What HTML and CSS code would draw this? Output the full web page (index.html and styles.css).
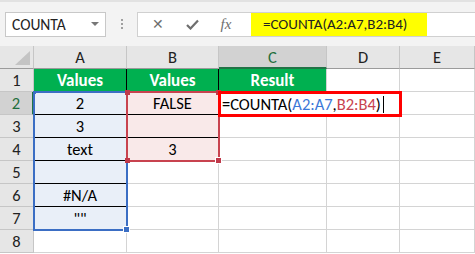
FILE: index.html
```html
<!DOCTYPE html>
<html>
<head>
<meta charset="utf-8">
<link rel="stylesheet" href="styles.css">
</head>
<body>
<div class="toolbar">
  <div class="namebox"><span>COUNTA</span><span class="caret"></span></div>
  <div class="dots"><i></i><i></i><i></i></div>
  <div class="fbar">
    <span class="ico x">✕</span>
    <span class="ico ok"><svg width="13" height="11" viewBox="0 0 13 11"><path d="M1 6 L4.5 9.5 L12 1.5" fill="none" stroke="#6e6e6e" stroke-width="2.2"/></svg></span>
    <span class="ico fx">fx</span>
    <span class="formula">=COUNTA(A2:A7,B2:B4)</span>
  </div>
</div>
<div class="wrap">
<div class="sheet">
  <div class="corner"><span class="tri"></span></div>
  <div class="ch">A</div><div class="ch">B</div><div class="ch sel">C</div><div class="ch">D</div><div class="ch">E</div>

  <div class="rh">1</div><div class="c green bk">Values</div><div class="c green bk">Values</div><div class="c green">Result</div><div class="c"></div><div class="c"></div>
  <div class="rh sel">2</div><div class="c blue">2</div><div class="c pink">FALSE</div><div class="c"></div><div class="c"></div><div class="c"></div>
  <div class="rh">3</div><div class="c blue">3</div><div class="c pink"></div><div class="c"></div><div class="c"></div><div class="c"></div>
  <div class="rh">4</div><div class="c blue">text</div><div class="c pink">3</div><div class="c"></div><div class="c"></div><div class="c"></div>
  <div class="rh">5</div><div class="c blue"></div><div class="c"></div><div class="c"></div><div class="c"></div><div class="c"></div>
  <div class="rh">6</div><div class="c blue">#N/A</div><div class="c"></div><div class="c"></div><div class="c"></div><div class="c"></div>
  <div class="rh">7</div><div class="c blue last">""</div><div class="c"></div><div class="c"></div><div class="c"></div><div class="c"></div>
  <div class="rh">8</div><div class="c"></div><div class="c"></div><div class="c"></div><div class="c"></div><div class="c"></div>
</div>
<div class="overlay">
  <div class="range-a"><span class="h tl"></span><span class="h br"></span></div>
  <div class="range-b"><span class="h tl"></span><span class="h tr"></span><span class="h bl"></span><span class="h br"></span></div>
  <div class="edit"><span>=COUNTA(</span><span class="ra">A2:A7</span><span>,</span><span class="rb">B2:B4</span><span>)</span><span class="cursor"></span></div>
</div>
</div>
</body>
</html>
```
FILE: styles.css
```css
* { box-sizing: border-box; }
body {
  margin: 0;
  width: 475px;
  height: 254px;
  overflow: hidden;
  font-family: Carlito, Lato, "Liberation Sans", sans-serif;
  background: #fff;
  color: #000;
}
.toolbar {
  height: 46px;
  background: #f3f3f3;
  border-top: 2px solid #e2e2e2;
  display: flex;
  align-items: center;
  padding-left: 5px;
}
.namebox {
  width: 101px;
  height: 25px;
  background: #fff;
  border: 1px solid #c8c8c8;
  display: flex;
  align-items: center;
  justify-content: space-between;
  padding: 0 6px 0 6px;
  font-size: 15.5px;
  color: #222;
}
.caret {
  width: 0; height: 0;
  border-left: 4px solid transparent;
  border-right: 4px solid transparent;
  border-top: 4px solid #777;
}
.dots {
  width: 31px;
  display: flex;
  flex-direction: column;
  align-items: center;
  gap: 2px;
}
.dots i { width: 2px; height: 2px; background: #a0a0a0; display: block; }
.fbar {
  flex: 1;
  height: 25px;
  background: #fff;
  border: 1px solid #d0d0d0;
  border-right: none;
  display: flex;
  align-items: center;
}
.ico { color: #6e6e6e; display: flex; align-items: center; justify-content: center; }
.x { width: 18px; margin-left: 11px; font-size: 14px; }
.ok { width: 14px; margin-left: 18px; }
.fx { margin-left: 21px; font-family: "Liberation Serif", serif; font-style: italic; font-size: 15px; width: 12px; }
.formula {
  margin-left: 19px;
  width: 176px;
  height: 23px;
  background: #ffff00;
  display: flex;
  align-items: center;
  padding-left: 12px;
  font-size: 15px;
  color: #222;
}
.wrap { display: grid; }
.sheet, .overlay {
  grid-area: 1 / 1;
  display: grid;
  grid-template-columns: 34px 93px 92px 108px 73px 75px;
  grid-template-rows: repeat(9, 23px);
  font-size: 16.5px;
}
.overlay { pointer-events: none; }
.corner {
  background: #e6e6e6;
  border-right: 1px solid #c6c6c6;
  border-bottom: 1px solid #9b9b9b;
  position: relative;
}
.tri {
  position: absolute;
  right: 3px; bottom: 3px;
  width: 0; height: 0;
  border-left: 15px solid transparent;
  border-bottom: 14px solid #c4c4c4;
}
.ch {
  background: #e6e6e6;
  border-right: 1px solid #c6c6c6;
  border-bottom: 1px solid #9b9b9b;
  display: flex; align-items: center; justify-content: center;
  color: #222;
  font-size: 16.5px;
}
.ch.sel { background: #d2d2d2; color: #1e6e3c; border-bottom: 2px solid #217346; }
.rh {
  background: #e6e6e6;
  border-right: 1px solid #c6c6c6;
  border-bottom: 1px solid #c6c6c6;
  display: flex; align-items: center; justify-content: center;
  color: #222;
}
.rh.sel { background: #d2d2d2; border-right: 2px solid #217346; color: #1e6e3c; }
.c {
  border-right: 1px solid #d4d4d4;
  border-bottom: 1px solid #d4d4d4;
  display: flex; align-items: center; justify-content: center;
}
.green { background: #00b050; color: #fff; font-weight: bold; font-size: 17px; }
.green.bk { border-right-color: #000; }
.blue { background: #e9eff8; border-bottom-color: #000; }
.pink { background: #f9e9e9; border-bottom-color: #000; }
.range-a {
  grid-column: 2; grid-row: 3 / 9;
  margin: -1px -1px -1px -1px;
  border: 2px solid #3b6ec4;
  position: relative;
}
.range-b {
  grid-column: 3; grid-row: 3 / 6;
  margin: -1px -1px -1px -1px;
  border: 2px solid #c8434f;
  position: relative;
}
.h { position: absolute; width: 5px; height: 5px; }
.range-a .h { background: #3b6ec4; }
.range-b .h { background: #c0394a; }
.h.tl { left: -3px; top: -3px; }
.h.tr { right: -3px; top: -3px; }
.h.bl { left: -3px; bottom: -3px; }
.h.br { right: -4px; bottom: -4px; width: 7px; height: 7px; border: 1px solid #fff; }
.range-a .h.tl { left: -2px; top: -2px; width: 3px; height: 3px; }
.edit {
  grid-column: 4 / 6; grid-row: 3;
  margin: -1px -2px -2px -1px;
  border: 3px solid #ff0000;
  background: #fff;
  display: flex; align-items: center;
  padding-left: 1px;
  font-size: 16.5px;
  z-index: 2;
}
.ra { color: #3b78d8; }
.rb { color: #c8434f; }
.cursor { width: 1px; height: 17px; background: #000; margin-left: 2px; }
```
